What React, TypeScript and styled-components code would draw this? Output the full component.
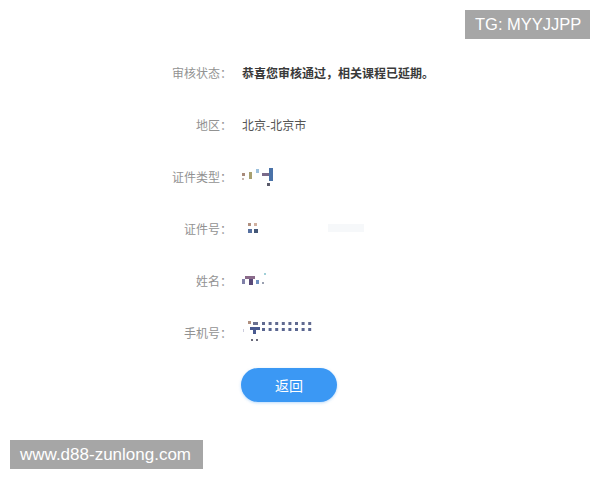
import React, { FC } from 'react';
import styled, { createGlobalStyle } from 'styled-components';

const GlobalStyle = createGlobalStyle`
  html, body {
    margin: 0;
    padding: 0;
    background: #ffffff;
  }
  body {
    font-family: "Noto Sans CJK SC", "Liberation Sans", sans-serif;
  }
`;

const Page = styled.div`
  position: relative;
  width: 600px;
  height: 480px;
  overflow: hidden;
  background: #fff;
`;

const Form = styled.div`
  display: flex;
  flex-direction: column;
  padding-top: 46px;
`;

const Row = styled.div`
  display: grid;
  grid-template-columns: 232px 1fr;
  column-gap: 10px;
  align-items: center;
  height: 52px;
`;

const Label = styled.div`
  text-align: right;
  font-size: 12px;
  color: #929292;
  white-space: nowrap;
`;

const Value = styled.div<{ $strong?: boolean }>`
  font-size: 12px;
  color: ${(p) => (p.$strong ? '#3a3a3a' : '#555')};
  font-weight: ${(p) => (p.$strong ? 700 : 400)};
  white-space: nowrap;
  display: flex;
  align-items: center;
`;

const Actions = styled.div`
  display: flex;
  padding-left: 241px;
  margin-top: 10px;
`;

const BackButton = styled.button`
  width: 96px;
  height: 34px;
  border: none;
  border-radius: 17px;
  background: #3b98f4;
  color: #fff;
  font-size: 14px;
  font-family: "Noto Sans CJK SC", sans-serif;
  cursor: pointer;
  box-shadow: 0 1px 3px rgba(59, 152, 244, 0.35);
`;

const Stamp = styled.div`
  position: absolute;
  background: #a6a6a6;
  color: #fff;
  font-family: "Liberation Sans", Arial, sans-serif;
  height: 29px;
  line-height: 29px;
  padding: 0 10px;
  white-space: nowrap;
`;

const TgStamp = styled(Stamp)`
  top: 10px;
  right: 10px;
  width: 105px;
  font-size: 16.5px;
`;

const SiteStamp = styled(Stamp)`
  left: 10px;
  top: 440px;
  width: 173px;
  font-size: 17px;
`;

type Cell = [number, number, number, number, string];

const Mosaic: FC<{ w: number; h: number; cells: Cell[] }> = ({ w, h, cells }) => (
  <svg width={w} height={h} viewBox={`0 0 ${w} ${h}`}>
    {cells.map(([x, y, cw, ch, c], i) => (
      <rect key={i} x={x} y={y} width={cw} height={ch} fill={c} />
    ))}
  </svg>
);

// offsets relative to the svg box
const typeCells: Cell[] = [
  [0, 9, 3, 3, '#a88a7a'],
  [0, 14, 2, 2, '#c8b8b0'],
  [7, 8, 3, 7, '#a8a070'],
  [14, 5, 3, 4, '#9cc0dc'],
  [20, 9, 7, 3, '#7a6a8a'],
  [27, 4, 4, 13, '#4a72a8'],
  [25, 19, 3, 3, '#5a5a6a'],
];

const idCells: Cell[] = [
  [6, 2, 3, 3, '#b09080'],
  [12, 2, 3, 3, '#d0b0a0'],
  [6, 8, 4, 4, '#5670a0'],
  [12, 8, 4, 4, '#445878'],
  [86, 3, 36, 8, '#f6f8fa'],
];

const nameCells: Cell[] = [
  [0, 6, 3, 5, '#8080a8'],
  [3, 3, 10, 3, '#8a6a8a'],
  [7, 6, 4, 6, '#5a4a78'],
  [14, 7, 3, 4, '#7090c0'],
  [20, 9, 2, 2, '#9aa0b0'],
  [22, 0, 2, 2, '#a0d0d8'],
];

const phoneCells: Cell[] = (() => {
  const cells: Cell[] = [
    [6, 0, 3, 3, '#b09080'],
    [11, 1, 5, 3, '#6a7090'],
    [8, 6, 10, 3, '#4a5a90'],
    [11, 8, 3, 5, '#4a5a90'],
    [9, 18, 2, 2, '#6a6a7a'],
    [14, 18, 2, 2, '#6a6a7a'],
    [1, 8, 1, 3, '#ccd'],
  ];
  for (let i = 0; i < 8; i++) {
    cells.push([20 + i * 6.6, 1, 3, 3, '#606a90']);
    cells.push([20 + i * 6.6, 7, 3, 3, '#5a6690']);
  }
  return cells;
})();

const rows: { label: string; value: React.ReactNode; strong?: boolean }[] = [
  { label: '审核状态：', value: '恭喜您审核通过，相关课程已延期。', strong: true },
  { label: '地区：', value: '北京-北京市' },
  { label: '证件类型：', value: <Mosaic w={34} h={24} cells={typeCells} /> },
  { label: '证件号：', value: <Mosaic w={130} h={14} cells={idCells} /> },
  { label: '姓名：', value: <Mosaic w={28} h={14} cells={nameCells} /> },
  { label: '手机号：', value: <Mosaic w={80} h={22} cells={phoneCells} /> },
];

const App: FC = () => (
  <Page>
    <GlobalStyle />
    <Form>
      {rows.map((r) => (
        <Row key={r.label}>
          <Label>{r.label}</Label>
          <Value $strong={r.strong}>{r.value}</Value>
        </Row>
      ))}
      <Actions>
        <BackButton>返回</BackButton>
      </Actions>
    </Form>
    <TgStamp>TG: MYYJJPP</TgStamp>
    <SiteStamp>www.d88-zunlong.com</SiteStamp>
  </Page>
);

export default App;
